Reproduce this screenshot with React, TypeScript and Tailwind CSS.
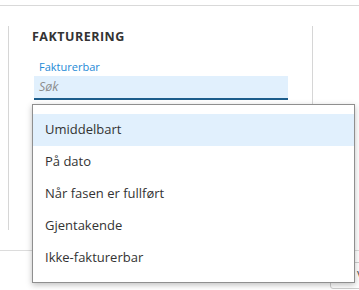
const options = ["Umiddelbart", "På dato", "Når fasen er fullført", "Gjentakende", "Ikke-fakturerbar"];

export default function App() {
  return (
    <div
      className="relative w-[359px] h-[290px] overflow-hidden bg-white text-[#333]"
      style={{ fontFamily: '"Open Sans", "Noto Sans", sans-serif' }}
    >
      {/* top rule */}
      <div className="mt-[5px] border-t border-[#d9d9d9]" />

      {/* section */}
      <div className="ml-[8px] mt-[20px] w-[305px] h-[204px] border-l border-r border-[#d6d6d6] pl-[23px] pt-[4px]">
        <h2 className="text-[12.5px] leading-[14px] font-bold tracking-[0.04em] text-[#333]">FAKTURERING</h2>
        <div className="mt-[16px] ml-[7px] text-[11px] leading-[14px] text-[#1d8ad6]">Fakturerbar</div>
        <div className="mt-[2px] ml-[2px] w-[254px] h-[24px] bg-[#e1f0fd] border-b-2 border-[#1c5d8c] pl-[5px] flex items-center">
          <span className="italic text-[12.5px] text-[#8c8c8c]">Søk</span>
        </div>
      </div>

      {/* footer rule + button */}
      <div className="mt-[20px] border-t border-[#dcdcdc]">
        <div className="ml-[330px] mt-[11px] h-[27px] w-[80px] border border-[#cfcfcf] rounded-[3px] pl-[26px] flex items-center text-[13px] text-[#555]">
          Vis
        </div>
      </div>

      {/* dropdown menu */}
      <div className="absolute left-[32px] top-[104px] w-[323px] h-[179px] bg-white border border-[#8f8f8f] shadow-[0_2px_6px_rgba(0,0,0,0.25)] pt-[9px]">
        {options.map((o, i) => (
          <div
            key={o}
            className={`h-[32px] flex items-center pl-[12px] text-[13px] text-[#333] ${i === 0 ? "bg-[#e1f0fd]" : ""}`}
          >
            {o}
          </div>
        ))}
      </div>
    </div>
  );
}
